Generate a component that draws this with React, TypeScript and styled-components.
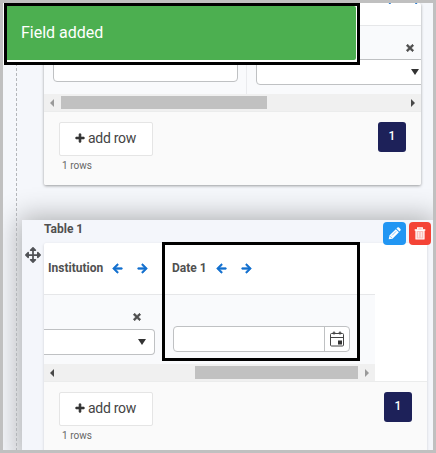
import React from 'react';
import styled, { createGlobalStyle } from 'styled-components';
import { FaArrowLeft, FaArrowRight, FaArrowsAlt, FaPlus, FaTimes } from 'react-icons/fa';

const Global = createGlobalStyle`
  * { box-sizing: border-box; }
  body { margin: 0; font-family: Roboto, sans-serif; color: #505050; }
  svg { display: block; flex: none; }
`;

const Frame = styled.main`
  position: relative;
  width: 436px;
  height: 453px;
  border: 3px solid #c0c0c0;
  overflow: hidden;
  background: #f5f7fb;
`;

const Guide = styled.div`
  position: absolute;
  z-index: 2;
  left: 13px;
  top: 60px;
  bottom: 0;
  width: 1px;
  background: repeating-linear-gradient(to bottom, #b4b6ba 0 3px, transparent 3px 5px);
`;

const Card = styled.section<{ $width: number; $height: number; $flat?: boolean }>`
  width: ${(p) => p.$width}px;
  height: ${(p) => p.$height}px;
  background: #fff;
  display: flex;
  flex-direction: column;
  overflow: hidden;
  border-radius: 2px;
  box-shadow: ${(p) => (p.$flat ? '0 1px 3px rgba(0, 0, 0, 0.16)' : '0 1px 3px rgba(0, 0, 0, 0.38)')};
`;

const FirstSlot = styled.div`
  margin-left: 41px;
`;

const ActivePanel = styled.div`
  position: relative;
  width: 411px;
  height: 240px;
  margin: 35px 0 0 19px;
  background: #f4f6fb;
  box-shadow: 0 0 26px 3px rgba(0, 0, 0, 0.3);
  display: grid;
  grid-template-columns: 22px 1fr;
  grid-template-rows: 23px 1fr;
`;

const PanelTitle = styled.div`
  grid-column: 2;
  font-size: 12px;
  line-height: 18px;
  font-weight: 700;
`;

const Handle = styled.div`
  padding: 4px 0 0 3px;
  color: #505256;
`;

const HeaderRow = styled.div<{ $height: number; $width: number }>`
  height: ${(p) => p.$height}px;
  width: ${(p) => p.$width}px;
  flex: none;
  display: flex;
  border-bottom: 1px solid #e6e7e9;
`;

const Heading = styled.div<{ $width: number; $indent: number; $gap: number }>`
  width: ${(p) => p.$width}px;
  padding: 0 0 2px ${(p) => p.$indent}px;
  display: flex;
  align-items: center;
  font-size: 12px;
  font-weight: 700;
  white-space: nowrap;

  svg { color: #1370cf; margin-top: 2px; overflow: visible; }
  path { stroke: currentColor; stroke-width: 30px; }
  svg:first-of-type { margin-left: ${(p) => p.$gap}px; }
  svg + svg { margin-left: 14px; }
`;

const ClippedArrows = styled.div`
  display: flex;
  gap: 14px;
  margin: -10px 0 0 340px;
  color: #1370cf;
`;

const Body = styled.div<{ $width: number }>`
  flex: 1;
  width: ${(p) => p.$width}px;
  background: #f9fafc;
  display: flex;
`;

const Cell = styled.div<{ $width: number; $divider?: boolean; $top?: number; $left?: number }>`
  width: ${(p) => p.$width}px;
  flex: none;
  padding: ${(p) => p.$top ?? 0}px 0 0 ${(p) => p.$left ?? 0}px;
  border-right: ${(p) => (p.$divider ? '1px solid #eaebee' : '0')};
`;

const ClearIcon = styled(FaTimes)<{ $left: number; $gap: number }>`
  color: #4d4d4d;
  margin: 0 0 ${(p) => p.$gap}px ${(p) => p.$left}px;
  overflow: visible;
  path { stroke: currentColor; stroke-width: 42px; }
`;

const Field = styled.div<{ $width: number; $round: string; $open?: boolean; $caret?: number }>`
  width: ${(p) => p.$width}px;
  height: 26px;
  background: #fff;
  border: 1px solid #bfc1c3;
  border-left-width: ${(p) => (p.$open ? 0 : 1)}px;
  border-radius: ${(p) => p.$round};
  display: flex;
  align-items: center;
  justify-content: flex-end;
  padding-right: ${(p) => p.$caret ?? 0}px;
`;

const Caret = styled.i`
  border: 4px solid transparent;
  border-top: 6px solid #333;
  border-bottom: 0;
`;

const CalendarButton = styled.div`
  width: 25px;
  height: 24px;
  border-left: 1px solid #bfc1c3;
  display: grid;
  place-items: center;
`;

const Scroll = styled.div<{ $width: number; $offset: number; $thumb: number }>`
  width: ${(p) => p.$width}px;
  height: 18px;
  flex: none;
  background: #f0f0f0;
  display: flex;
  align-items: center;

  b { width: ${(p) => p.$thumb}px; height: 13px; margin: 0 auto 1px ${(p) => p.$offset}px; background: #c1c1c1; }
`;

const ScrollArrow = styled.i<{ $side: 'left' | 'right'; $muted?: boolean; $end?: number }>`
  border: 4px solid transparent;
  border-${(p) => (p.$side === 'left' ? 'right' : 'left')}-color: ${(p) => (p.$muted ? '#999' : '#484848')};
  border-${(p) => p.$side}-width: 0;
  margin: 0 ${(p) => p.$end ?? 0}px 1px ${(p) => (p.$side === 'left' ? 6 : 0)}px;
`;

const Footer = styled.footer<{ $height: number; $right: number; $top: number }>`
  height: ${(p) => p.$height}px;
  flex: none;
  background: #fafafa;
  padding: ${(p) => p.$top}px ${(p) => p.$right}px 0 15px;
  display: flex;
  justify-content: space-between;
  box-shadow: 0 -1px #ebecec;
`;

const AddButton = styled.button`
  width: 94px;
  height: 34px;
  padding: 0 1px 2px 0;
  background: #fff;
  border: 1px solid #e5e5e5;
  border-radius: 2px;
  display: flex;
  align-items: center;
  justify-content: center;
  gap: 3px;
  font: 400 14px Roboto, sans-serif;
  letter-spacing: -0.25px;
  color: #444;

  svg { overflow: visible; }
  path { stroke: currentColor; stroke-width: 34px; }
`;

const Count = styled.div`
  font-size: 10px;
  line-height: 14px;
  padding: 3px 0 0 3px;
  letter-spacing: 0.05px;
  color: #666;
`;

const Page = styled.div`
  width: 28px;
  height: 30px;
  border-radius: 3px;
  background: #1d2159;
  color: #fff;
  font-size: 12px;
  font-weight: 500;
  line-height: 29px;
  text-align: center;
`;

const Actions = styled.div`
  position: absolute;
  left: 361px;
  top: 2px;
  display: flex;
  gap: 3px;
`;

const Action = styled.button<{ $color: string; $width: number }>`
  width: ${(p) => p.$width}px;
  height: 23px;
  border: 0;
  padding: 0;
  border-radius: 4px;
  display: grid;
  place-items: center;
  background: ${(p) => p.$color};
`;

const Highlight = styled.div`
  position: absolute;
  z-index: 3;
  left: 159px;
  top: 239px;
  width: 198px;
  height: 119px;
  border: 3px solid #000;
`;

const Toast = styled.div`
  position: absolute;
  z-index: 4;
  left: 1px;
  top: 0;
  width: 356px;
  height: 62px;
  border: 3px solid #000;
  background: #fff;
  padding: 0 1px 2px 0;
  box-shadow: -1px 0 #fff;
`;

const ToastMessage = styled.div`
  height: 54px;
  background: #4caf50;
  border-radius: 0 2px 2px 0;
  padding: 1px 0 0 14px;
  color: #fff;
  font-size: 16px;
  line-height: 52px;
`;

function Calendar() {
  return (
    <svg width="15" height="16" viewBox="0 0 15 16" fill="none" stroke="#444">
      <rect x=".5" y="2.5" width="13" height="12.5" rx="1" />
      <path d="M1 6.5h12M2.5 2h3M8.5 2h3" />
      <path d="M4 .5v3M10 .5v3" strokeWidth="1.3" />
      <path d="M8 9.5h4v4H8z" fill="#333" stroke="none" />
    </svg>
  );
}

function Pencil() {
  return (
    <svg width="13" height="13" viewBox="0 0 13 13" fill="#fff">
      <path d="M.7 12.3l.7-3.7 6.4-6.4 3.1 3.1-6.4 6.4zM8.5 1.5l.9-.9q.8-.7 1.6 0l1.4 1.4q.7.8 0 1.6l-.9.9z" />
      <path d="M1.9 9.1l2 2M4 8.5l4.2-4.2" stroke="#2196f3" strokeWidth=".6" />
    </svg>
  );
}

function Trash() {
  return (
    <svg width="12" height="13" viewBox="0 0 12 13" fill="none" stroke="#fff">
      <path d="M.7 3h10.6" strokeWidth="1.6" />
      <path d="M3.7 2.5V1h4.6v1.5" strokeWidth="1.3" />
      <path d="M2 3.5h8V12H2z" fill="#fbc1bc" strokeWidth="1.2" strokeLinejoin="round" />
      <path d="M4.7 5v5.5M7.3 5v5.5" strokeWidth=".8" />
    </svg>
  );
}

function TableFooter({ height, right, top }: { height: number; right: number; top: number }) {
  return (
    <Footer $height={height} $right={right} $top={top}>
      <div>
        <AddButton><FaPlus size={10} color="#333" />add row</AddButton>
        <Count>1 rows</Count>
      </div>
      <Page>1</Page>
    </Footer>
  );
}

export default function App() {
  return (
    <>
      <Global />
      <Frame>
        <FirstSlot>
          <Card $width={377} $height={182}>
            <HeaderRow $height={23} $width={377}>
              <ClippedArrows><FaArrowLeft size={12} /><FaArrowRight size={12} /></ClippedArrows>
            </HeaderRow>
            <Body $width={377}>
              <Cell $width={203} $divider $top={30} $left={9}>
                <Field $width={185} $round="4px" />
              </Cell>
              <Cell $width={174} $top={17} $left={9}>
                <ClearIcon size={10} $left={149} $gap={6} />
                <Field $width={170} $round="4px 0 0 4px" $caret={6}><Caret /></Field>
              </Cell>
            </Body>
            <Scroll $width={377} $offset={7} $thumb={206}>
              <ScrollArrow $side="left" $muted /><b /><ScrollArrow $side="right" $end={6} />
            </Scroll>
            <TableFooter height={73} right={15} top={10} />
          </Card>
        </FirstSlot>

        <ActivePanel>
          <PanelTitle>Table 1</PanelTitle>
          <Handle><FaArrowsAlt size={16} /></Handle>
          <Card $width={383} $height={220} $flat>
            <HeaderRow $height={52} $width={331}>
              <Heading $width={118} $indent={4} $gap={9}>
                Institution<FaArrowLeft size={11} /><FaArrowRight size={11} />
              </Heading>
              <Heading $width={200} $indent={10} $gap={9}>
                Date 1<FaArrowLeft size={11} /><FaArrowRight size={11} />
              </Heading>
            </HeaderRow>
            <Body $width={331}>
              <Cell $width={118} $top={17}>
                <ClearIcon size={10} $left={88} $gap={7} />
                <Field $width={111} $round="0 4px 4px 0" $open $caret={8}><Caret /></Field>
              </Cell>
              <Cell $width={213} $top={31} $left={11}>
                <Field $width={177} $round="4px"><CalendarButton><Calendar /></CalendarButton></Field>
              </Cell>
            </Body>
            <Scroll $width={331} $offset={141} $thumb={163}>
              <ScrollArrow $side="left" /><b /><ScrollArrow $side="right" $muted $end={6} />
            </Scroll>
            <TableFooter height={81} right={15} top={10} />
          </Card>
          <Actions>
            <Action $color="#2196f3" $width={23}><Pencil /></Action>
            <Action $color="#f44336" $width={22}><Trash /></Action>
          </Actions>
        </ActivePanel>
        <Guide />
        <Highlight />
        <Toast><ToastMessage>Field added</ToastMessage></Toast>
      </Frame>
    </>
  );
}
